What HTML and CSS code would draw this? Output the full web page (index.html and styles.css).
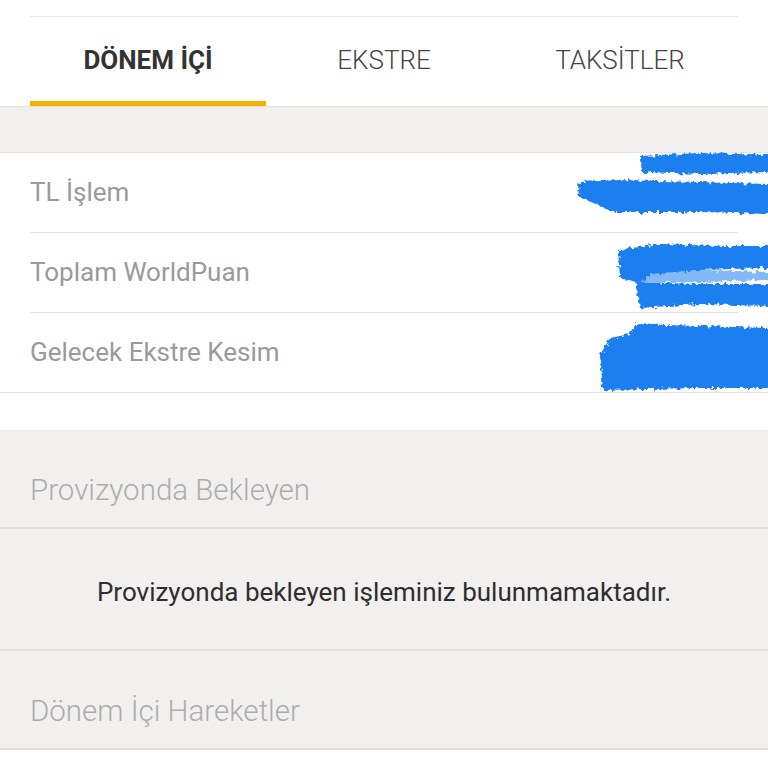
FILE: index.html
```html
<!DOCTYPE html>
<html lang="tr">
<head>
<meta charset="utf-8">
<link rel="stylesheet" href="styles.css">
</head>
<body>
<div class="page">
  <div class="top-gap"><div class="top-line"></div></div>
  <nav class="tabs">
    <div class="tab active">DÖNEM İÇİ</div>
    <div class="tab">EKSTRE</div>
    <div class="tab">TAKSİTLER</div>
  </nav>
  <div class="spacer"></div>
  <section class="summary">
    <div class="row"><span class="label">TL İşlem</span></div>
    <div class="row"><span class="label">Toplam WorldPuan</span></div>
    <div class="row last"><span class="label">Gelecek Ekstre Kesim</span></div>
  </section>
  <div class="white-gap"></div>
  <section class="group">
    <div class="group-title">Provizyonda Bekleyen</div>
    <div class="empty">Provizyonda bekleyen işleminiz bulunmamaktadır.</div>
    <div class="group-title">Dönem İçi Hareketler</div>
  </section>
  <svg class="redact" width="768" height="768" viewBox="0 0 768 768">
    <defs>
      <filter id="rough" x="-10%" y="-30%" width="120%" height="160%">
        <feTurbulence type="fractalNoise" baseFrequency="0.25" numOctaves="2" seed="3"/>
        <feDisplacementMap in="SourceGraphic" scale="7"/>
      </filter>
    </defs>
    <g fill="#1f7ff0" filter="url(#rough)">
      <path d="M640 156 L700 153 L770 155 L770 172 L700 174 L642 172 Z"/>
      <path d="M580 182 L620 180 L700 182 L770 184 L770 214 L700 212 L615 212 L600 206 L578 196 Z"/>
      <path d="M618 250 L660 244 L720 246 L770 246 L770 268 L700 270 L650 274 L640 284 L620 278 Z"/>
      <path d="M640 272 L700 270 L770 272 L770 280 L700 282 L640 282 Z" opacity="0.55"/>
      <path d="M636 282 L700 284 L770 284 L770 306 L700 304 L640 308 Z"/>
      <path d="M634 324 L700 326 L770 328 L770 388 L700 388 L603 390 L600 355 L610 338 L630 334 Z"/>
    </g>
  </svg>
</div>
</body>
</html>
```
FILE: styles.css
```css
html, body {
  margin: 0;
  padding: 0;
  background: #ffffff;
}
body {
  font-family: Roboto, "Noto Sans", "Liberation Sans", sans-serif;
  width: 768px;
  height: 768px;
  overflow: hidden;
}
.page {
  position: relative;
  width: 768px;
  height: 768px;
  background: #ffffff;
}
.top-gap {
  height: 17px;
  padding: 0 30px;
  box-sizing: border-box;
  display: flex;
  align-items: flex-end;
}
.top-line {
  flex: 1;
  height: 1px;
  background: #e6e6e6;
}
.tabs {
  display: flex;
  padding: 0 30px;
  height: 89px;
  border-bottom: 1px solid #e2e2e2;
}
.tab {
  flex: 1;
  display: flex;
  align-items: center;
  justify-content: center;
  padding-top: 1px;
  font-size: 26px;
  font-weight: 300;
  color: #444444;
  box-sizing: border-box;
  border-bottom: 5px solid transparent;
}
.tab.active {
  font-weight: 700;
  color: #333333;
  border-bottom-color: #f7b100;
}
.spacer {
  height: 45px;
  background: #f1f0ef;
  border-bottom: 1px solid #e4e4e4;
}
.summary {
  background: #ffffff;
  border-bottom: 1px solid #e4e4e4;
}
.row {
  height: 79px;
  margin: 0 30px;
  border-bottom: 1px solid #dedede;
  display: flex;
  align-items: center;
}
.row.last {
  border-bottom: none;
}
.label {
  font-size: 26px;
  color: #9a9a9a;
  padding-bottom: 2px;
}
.white-gap {
  height: 37px;
  background: #ffffff;
}
.group {
  background: #f1f0ef;
}
.group-title {
  height: 99px;
  box-sizing: border-box;
  padding: 22px 30px 0;
  display: flex;
  align-items: center;
  font-size: 29.5px;
  font-weight: 300;
  color: #adadad;
  border-bottom: 2px solid #e0dfde;
}
.empty {
  height: 122px;
  display: flex;
  align-items: center;
  justify-content: center;
  font-size: 26px;
  color: #2e2e2e;
  border-bottom: 2px solid #e0dfde;
  padding-top: 6px;
  box-sizing: border-box;
}
.redact {
  position: absolute;
  left: 0;
  top: 0;
  pointer-events: none;
}
```
